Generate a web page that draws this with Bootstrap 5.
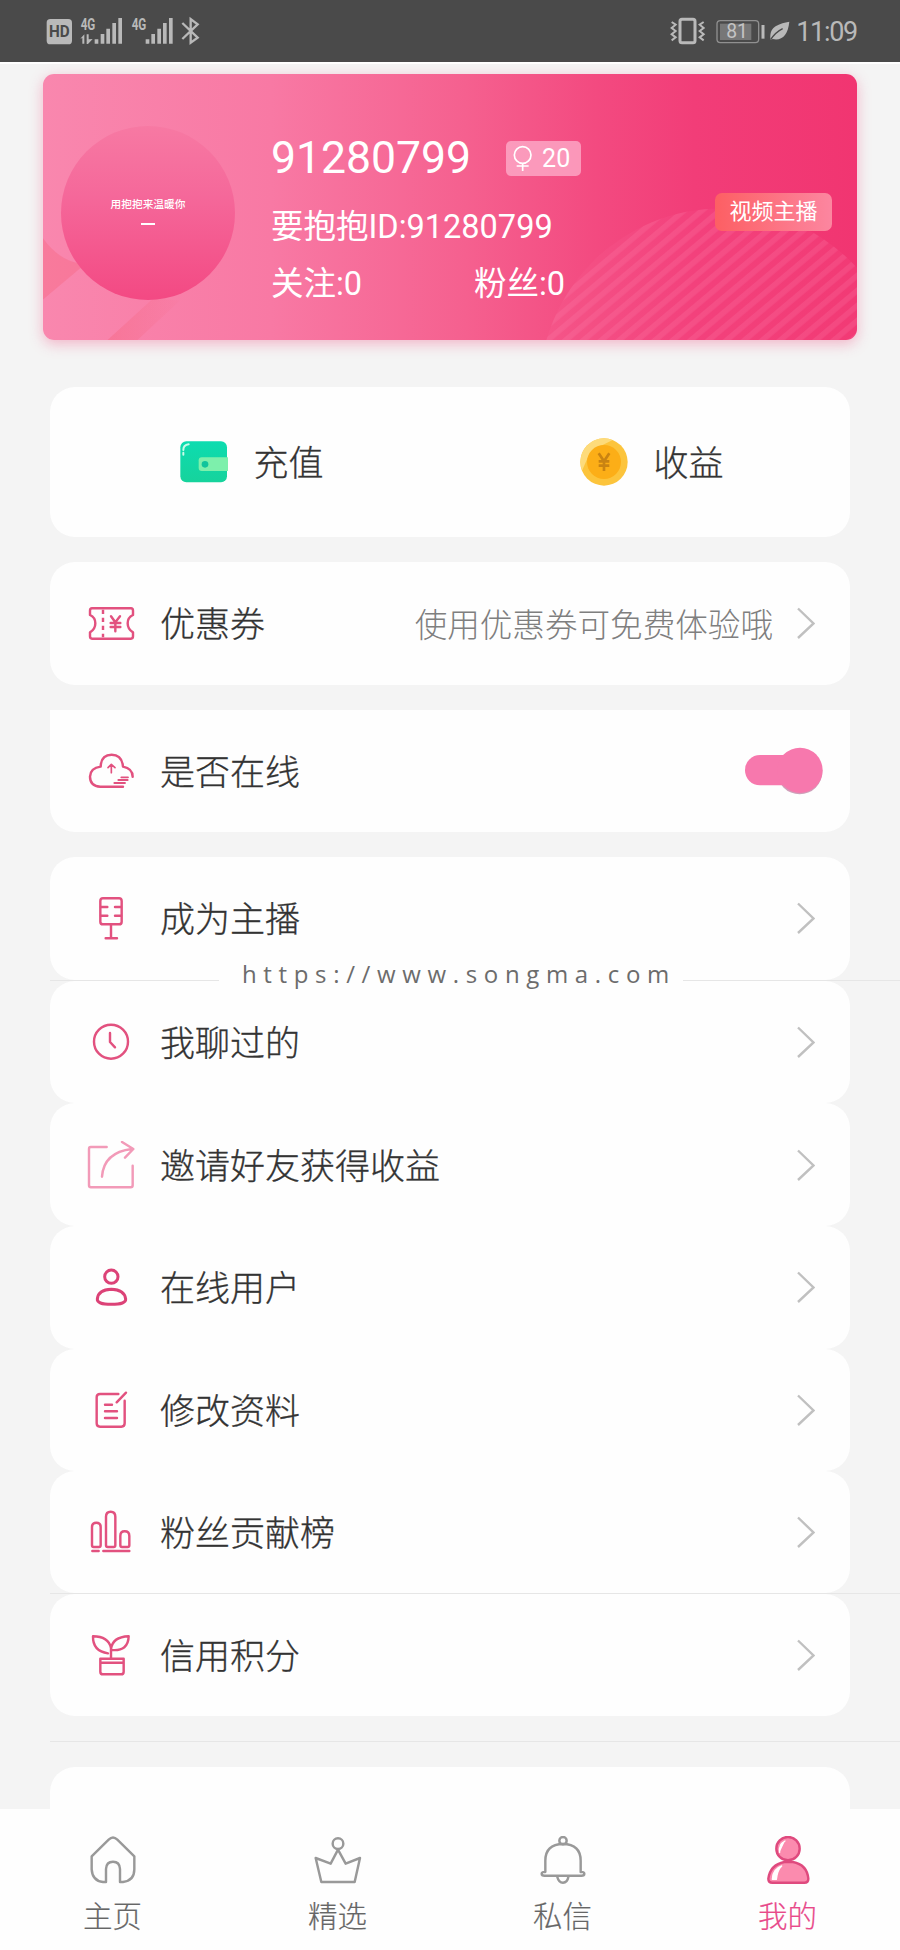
<!DOCTYPE html>
<html lang="zh-CN">
<head>
<meta charset="utf-8">
<meta name="viewport" content="width=device-width, initial-scale=1">
<title>我的</title>
<link href="https://cdn.jsdelivr.net/npm/bootstrap@5.3.0/dist/css/bootstrap.min.css" rel="stylesheet">
<style>
  body { font-family: Roboto, "Noto Sans CJK SC", sans-serif; background: #f4f4f4; color: #333; }
  .screen { width: 900px; height: 1950px; }
  .statusbar { height: 62px; background: #4a4a4a; color: #b9b9b9; box-shadow: 0 2px 0 #fff; }
  .signals { margin-left: 43px; }
  .clock { font-size: 27px; letter-spacing: -1.3px; line-height: 62px; padding-top: 2px; margin: 0 43px 0 -2px; }
  .profile { margin: 11.5px 43px 0; height: 266.5px; border-radius: 11px; color: #fff;
    background: linear-gradient(90deg, #f987ae 0%, #f879a4 28%, #f5608f 52%, #f34a80 68%, #f23d78 80%, #f13571 100%);
    box-shadow: 0 4px 14px rgba(240, 80, 130, .38); }
  .decor { border-radius: 11px; }
  .avatar { width: 174px; height: 174px; margin: 52.5px 0 0 18px; background: linear-gradient(180deg, #f779a3 0%, #f5689a 40%, #f34983 100%); }
  .motto { font: 500 10.7px/14px "Noto Sans CJK SC", sans-serif; padding-top: 71px; }
  .dash { width: 14px; height: 2px; background: #fff; margin-top: 12px; }
  .who { margin-left: 36px; }
  .who-line { margin-top: 56px; height: 56px; }
  .uname { font-size: 44.5px; line-height: 58px; }
  .meta { font-size: 32.5px; line-height: 48px; margin-top: 8.5px; }
  .meta.first { margin-top: 17.5px; }
  .follow { width: 203px; }
  .age { width: 75px; height: 35px; margin: 1px 0 0 35px; border-radius: 5px; background: rgba(255, 190, 215, .65); font-size: 25px; line-height: 35px; }
  .host { right: 25px; top: 119.5px; width: 117px; height: 38px; border-radius: 7px; font-size: 22px; line-height: 38px; background: linear-gradient(90deg, #fd5f63, #fc86a0); }
  .panel { width: 800px; margin-left: 50px; background: #fefefe; border-radius: 25px; }
  .square-top { border-top-left-radius: 0; border-top-right-radius: 0; }
  .square-bottom { border-bottom-left-radius: 0; border-bottom-right-radius: 0; }
  .item { height: 122.6px; padding: 0 35px 0 37px; flex: none; }
  .item.short { height: 121.6px; }
  .item .label, .pay .label { font-size: 35px; font-weight: 300; line-height: 50px; white-space: nowrap; padding-top: 6px; -webkit-text-stroke: .3px currentColor; }
  .item .label { margin-left: 25px; }
  .pay .label { margin-left: 25px; }
  .hint { font-size: 32.6px; font-weight: 300; color: #7f7f7f; margin-right: 24px; padding-top: 7px; }
  .ico { width: 48px; height: 48px; flex: none; fill: none; stroke: #e2517f; stroke-width: 7.3; stroke-linecap: round; stroke-linejoin: round; }
  .ico.pale { stroke: #f29ab8; }
  .ico.bold { stroke: #dc4277; stroke-width: 9; }
  .chev { width: 18px; height: 32px; fill: none; stroke: #c0c0c0; stroke-width: 2.4; flex: none; }
  .pay { height: 150px; margin-top: 47px; flex: none; }
  .pay a { padding-left: 4px; }
  .gap-row { margin-top: 25px; }
  .toggle { width: 78px; height: 48px; flex: none; margin-right: -8px; }
  .hair { height: 1px; margin-left: 50px; background: #e6e6e6; flex: none; }
  .mark-url { left: 169px; width: 464px; top: -22px; height: 31px; background: #fefefe; font: 24px/31px "Open Sans", sans-serif; letter-spacing: 6.65px; padding-left: 23px; color: #6c6c6c; white-space: nowrap; }
  .tabs { height: 141px; background: #fefefe; padding-top: 27px; }
  .tabs a { font-size: 29.5px; font-weight: 300; line-height: 44px; color: #666; -webkit-text-stroke: .2px currentColor; }
  .tabs .ico { stroke: #999; margin-bottom: 11px; }
  .tabs a.on { color: #e8498a; }
  .tabs .on .ico { stroke: #df4a7e; }
</style>
</head>
<body>
<div class="screen d-flex flex-column position-relative overflow-hidden">

  <header class="statusbar d-flex align-items-center flex-shrink-0">
    <svg class="signals" width="160" height="62" viewBox="0 0 480 186" fill="#b9b9b9">
      <rect x="11" y="57" width="76" height="76" rx="11"/>
      <text x="49" y="112" font-size="48" font-weight="700" fill="#4a4a4a" text-anchor="middle" textLength="62" lengthAdjust="spacingAndGlyphs">HD</text>
      <g font-size="49" font-weight="700">
        <text x="113" y="89" textLength="44" lengthAdjust="spacingAndGlyphs">4G</text>
        <text x="266" y="89" textLength="44" lengthAdjust="spacingAndGlyphs">4G</text>
      </g>
      <path d="M112 116 L124 103 V131 H118 V114Z M131 103 H137 V118 L149 117 L135 132 H131Z"/>
      <path d="M155 118h11v13h-11z M173 102h11v29h-11z M190 86h11v45h-11z M208 69h11v62h-11z M226 54h11v77h-11z M308 118h11v13h-11z M325 102h11v29h-11z M343 86h11v45h-11z M360 69h11v62h-11z M378 54h11v77h-11z"/>
      <path d="M418 69 L464 113 L443 128 V57 L464 73 L418 117" fill="none" stroke="#b9b9b9" stroke-width="7"/>
    </svg>
    <svg class="ms-auto" width="130" height="62" viewBox="650 0 390 186" fill="none" stroke="#b9b9b9" stroke-width="6">
      <rect x="686" y="58" width="45" height="70" rx="6" stroke-width="9"/>
      <path d="M661 66l12 8-12 10 12 9-12 10 12 9-12 9M757 66l-12 8 12 10-12 9 12 10-12 9 12 9"/>
      <rect x="797" y="62" width="125" height="66" rx="10" stroke="#909090" stroke-width="4"/>
      <rect x="806" y="71" width="94" height="49" fill="#777" stroke="none"/>
      <path d="M935 75V116" stroke-width="9"/>
      <text x="857" y="114" font-size="58" fill="#c4c4c4" stroke="none" text-anchor="middle">81</text>
      <path d="M958 120C953 82 974 73 1014 65C1010 105 992 123 964 117Z" fill="#b9b9b9" stroke="none"/>
      <path d="M958 119Q972 97 994 86" stroke="#4a4a4a" stroke-width="4"/>
    </svg>
    <span class="clock">11:09</span>
  </header>

  <section class="profile position-relative d-flex flex-shrink-0">
    <svg class="decor position-absolute top-0 start-0 w-100 h-100" viewBox="43 74 814 266" preserveAspectRatio="none">
      <defs>
        <pattern id="stripes" width="12" height="11.5" patternUnits="userSpaceOnUse" patternTransform="rotate(-40)">
          <rect width="12" height="11.5" fill="#ff8db5" fill-opacity=".06"/>
          <rect width="12" height="5.5" fill="#ff8db5" fill-opacity=".17"/>
        </pattern>
        <linearGradient id="fade" x1="0" y1="0" x2="1" y2="0"><stop offset="0" stop-color="#f5627c" stop-opacity=".4"/><stop offset="1" stop-color="#f5627c" stop-opacity=".05"/></linearGradient>
      </defs>
      <circle cx="722" cy="391" r="183" fill="url(#stripes)"/>
      <path d="M43 238Q60 262 85 264L43 299Z" fill="#f5627c" fill-opacity=".35"/>
      <path d="M107 340L153 298L180 300L137 340Z" fill="url(#fade)"/>
    </svg>
    <div class="avatar rounded-circle position-relative d-flex flex-column align-items-center flex-shrink-0">
      <span class="motto">用抱抱来温暖你</span>
      <span class="dash"></span>
    </div>
    <div class="who position-relative flex-grow-1">
      <div class="who-line d-flex align-items-center">
        <span class="uname">91280799</span>
        <span class="age d-flex align-items-center">
          <svg width="36" height="35" viewBox="0 0 108 105" fill="none" stroke="#fff" stroke-width="5"><circle cx="50" cy="42" r="25"/><path d="M50 67V90M32 75H68"/></svg>20
        </span>
      </div>
      <div class="meta first">要抱抱ID:91280799</div>
      <div class="meta d-flex"><span class="follow">关注:0</span><span>粉丝:0</span></div>
    </div>
    <span class="host position-absolute text-center">视频主播</span>
  </section>

  <section class="panel pay d-flex">
    <a class="col-6 d-flex align-items-center justify-content-center text-reset text-decoration-none">
      <svg width="48" height="48" viewBox="540 236 144 144"><defs><linearGradient id="wal" x1="0" y1="0" x2="0" y2="1"><stop stop-color="#0ddcb0"/><stop offset="1" stop-color="#16d39c"/></linearGradient></defs>
        <rect x="541" y="246" width="140" height="123" rx="18" fill="url(#wal)"/><path d="M605 294H684V335H605Q596 335 596 326V303Q596 294 605 294Z" fill="#7df0ac"/><circle cx="615" cy="315" r="10" fill="#10c49c"/><path d="M550 272Q550 257 566 255M550 280v6" stroke="#c9fbe9" stroke-width="6" fill="none" stroke-linecap="round"/></svg>
      <span class="label">充值</span>
    </a>
    <a class="col-6 d-flex align-items-center justify-content-center text-reset text-decoration-none">
      <svg width="48" height="48" viewBox="390 235 144 144"><circle cx="462" cy="307" r="71" fill="#fcc43c"/><path d="M396 333A71 71 0 0 1 488 241L440 265 415 290Z" fill="#fddb7b"/><circle cx="462" cy="307" r="51" fill="#fcae17"/><path d="M446 281L462 305 478 281M462 303V334M446 305H478M446 318H478" fill="none" stroke="#c98312" stroke-width="8"/></svg>
      <span class="label">收益</span>
    </a>
  </section>

  <section class="panel item d-flex align-items-center gap-row">
    <svg class="ico" viewBox="262 717 144 144"><path d="M277 745H394Q400 745 400 752V765Q384 772 384 790Q384 808 400 817V829Q400 836 394 836H277Q271 836 271 829V817Q287 808 287 790Q287 772 271 765V752Q271 745 277 745Z"/><path d="M310 749V832" stroke-dasharray="13 11" stroke-linecap="butt"/><path d="M334 769L347 787 361 769M347 787V814M333 789H362M333 801H362"/></svg>
    <span class="label">优惠券</span><span class="hint ms-auto">使用优惠券可免费体验哦</span>
    <svg class="chev" viewBox="0 0 18 32"><path d="M1 1.5L16.5 16.5 1 31"/></svg>
  </section>

  <section class="panel item square-top d-flex align-items-center gap-row">
    <svg class="ico" viewBox="262 142 144 144"><path d="M370 261H302Q271 259 271 231Q272 205 303 201Q304 165 336 165Q367 165 370 201Q399 207 399 231"/><path d="M335 219V196M325 204L335 194 346 204" stroke-width="5"/><path d="M365 233H385M356 241H384M344 250H376" stroke-width="5.5"/></svg>
    <span class="label">是否在线</span>
    <svg class="toggle ms-auto" viewBox="885 143 234 144"><circle cx="1049" cy="217" r="68" fill="#cfa0ba"/><rect x="885" y="167" width="190" height="91" rx="45" fill="#f778ad"/><circle cx="1050" cy="213" r="68" fill="#f778ad"/></svg>
  </section>

  <section class="panel item d-flex align-items-center gap-row">
    <svg class="ico" viewBox="262 584 144 144"><rect x="302" y="597" width="64" height="78" rx="8"/><path d="M304 623H323M304 649H323M346 623H364M346 649H364M334 677V716M318 717H352"/></svg>
    <span class="label">成为主播</span>
    <svg class="chev ms-auto" viewBox="0 0 18 32"><path d="M1 1.5L16.5 16.5 1 31"/></svg>
  </section>
  <div class="hair position-relative"><span class="mark-url position-absolute">https://www.songma.com</span></div>
  <section class="panel item d-flex align-items-center">
    <svg class="ico" viewBox="262 955 144 144"><circle cx="334" cy="1026" r="51"/><path d="M331 1000V1027L346 1043"/></svg>
    <span class="label">我聊过的</span>
    <svg class="chev ms-auto" viewBox="0 0 18 32"><path d="M1 1.5L16.5 16.5 1 31"/></svg>
  </section>
  <section class="panel item d-flex align-items-center">
    <svg class="ico pale" viewBox="262 183 144 144"><path d="M321 201H273Q268 201 268 207V316Q268 322 274 322H393Q399 322 399 316V257M307 290Q312 217 397 207M367 186L401 207 376 233"/></svg>
    <span class="label">邀请好友获得收益</span>
    <svg class="chev ms-auto" viewBox="0 0 18 32"><path d="M1 1.5L16.5 16.5 1 31"/></svg>
  </section>
  <section class="panel item d-flex align-items-center">
    <svg class="ico bold" viewBox="262 550 144 144"><circle cx="335" cy="591" r="20"/><path d="M293 658Q296 630 335 629Q374 630 378 658Q380 674 335 674Q291 674 293 658Z"/></svg>
    <span class="label">在线用户</span>
    <svg class="chev ms-auto" viewBox="0 0 18 32"><path d="M1 1.5L16.5 16.5 1 31"/></svg>
  </section>
  <section class="panel item d-flex align-items-center">
    <svg class="ico" viewBox="262 918 144 144"><path d="M356 942H301Q291 942 291 952V1030Q291 1040 301 1040H365Q375 1040 375 1030V962M351 967L379 938M316 974H337M316 994H352M316 1014H352"/></svg>
    <span class="label">修改资料</span>
    <svg class="chev ms-auto" viewBox="0 0 18 32"><path d="M1 1.5L16.5 16.5 1 31"/></svg>
  </section>
  <section class="panel item short d-flex align-items-center">
    <svg class="ico" viewBox="262 206 144 144"><path d="M277 263Q277 250 290 250Q303 250 303 263V318Q303 323 298 323H282Q277 323 277 318ZM319 232Q319 217 333 217Q347 217 347 232V318Q347 323 342 323H324Q319 323 319 318ZM362 290Q362 276 375 276Q389 276 389 290V318Q389 323 384 323H367Q362 323 362 318ZM278 335H297M311 335H389"/></svg>
    <span class="label">粉丝贡献榜</span>
    <svg class="chev ms-auto" viewBox="0 0 18 32"><path d="M1 1.5L16.5 16.5 1 31"/></svg>
  </section>
  <div class="hair"></div>
  <section class="panel item d-flex align-items-center">
    <svg class="ico" viewBox="262 574 144 144"><path d="M334 654V625Q326 590 280 590Q279 635 325 641M334 629Q338 592 387 590Q386 635 337 631M302 657H372V696Q372 704 364 704H310Q302 704 302 696ZM302 669H372"/></svg>
    <span class="label">信用积分</span>
    <svg class="chev ms-auto" viewBox="0 0 18 32"><path d="M1 1.5L16.5 16.5 1 31"/></svg>
  </section>
  <div class="hair gap-row"></div>
  <section class="panel square-bottom flex-grow-1 gap-row"></section>

  <nav class="tabs d-flex flex-shrink-0 text-center">
    <a class="col-3 d-flex flex-column align-items-center text-decoration-none">
      <svg class="ico" viewBox="266 108 144 144"><path d="M317 246V207Q318 185 338 185Q358 185 359 207V246H368Q402 242 402 208V169L351 119Q338 106 325 119L274 169V208Q276 242 308 246Z"/></svg>主页</a>
    <a class="col-3 d-flex flex-column align-items-center text-decoration-none">
      <svg class="ico" viewBox="943 108 144 144"><circle cx="1015" cy="131" r="16"/><path d="M1015 149L993 191 948 174 965 246H1065L1081 174 1038 191Z"/></svg>精选</a>
    <a class="col-3 d-flex flex-column align-items-center text-decoration-none">
      <svg class="ico" viewBox="266 828 144 144"><circle cx="338" cy="842" r="11"/><path d="M285 936V902Q285 853 338 852Q391 853 391 902V936Q402 935 402 941Q402 947 393 947H283Q274 947 274 941Q274 935 285 936ZM321 951Q325 968 338 968Q351 968 354 951"/></svg>私信</a>
    <a class="on col-3 d-flex flex-column align-items-center text-decoration-none">
      <svg class="ico" viewBox="941 828 144 144"><circle cx="1013" cy="866" r="35" fill="#fb8bae"/><path d="M1002 906H1028Q1070 914 1074 956Q1074 968 1062 968H966Q954 968 954 956Q960 914 1002 906Z" fill="#fb8bae"/><path d="M988 877Q984 853 1004 843M966 958Q966 928 994 918Q981 930 978 958Z" stroke="#fff" fill="#fff" stroke-width="4"/></svg>我的</a>
  </nav>
</div>
<script src="https://cdn.jsdelivr.net/npm/bootstrap@5.3.0/dist/js/bootstrap.bundle.min.js"></script>
</body>
</html>
